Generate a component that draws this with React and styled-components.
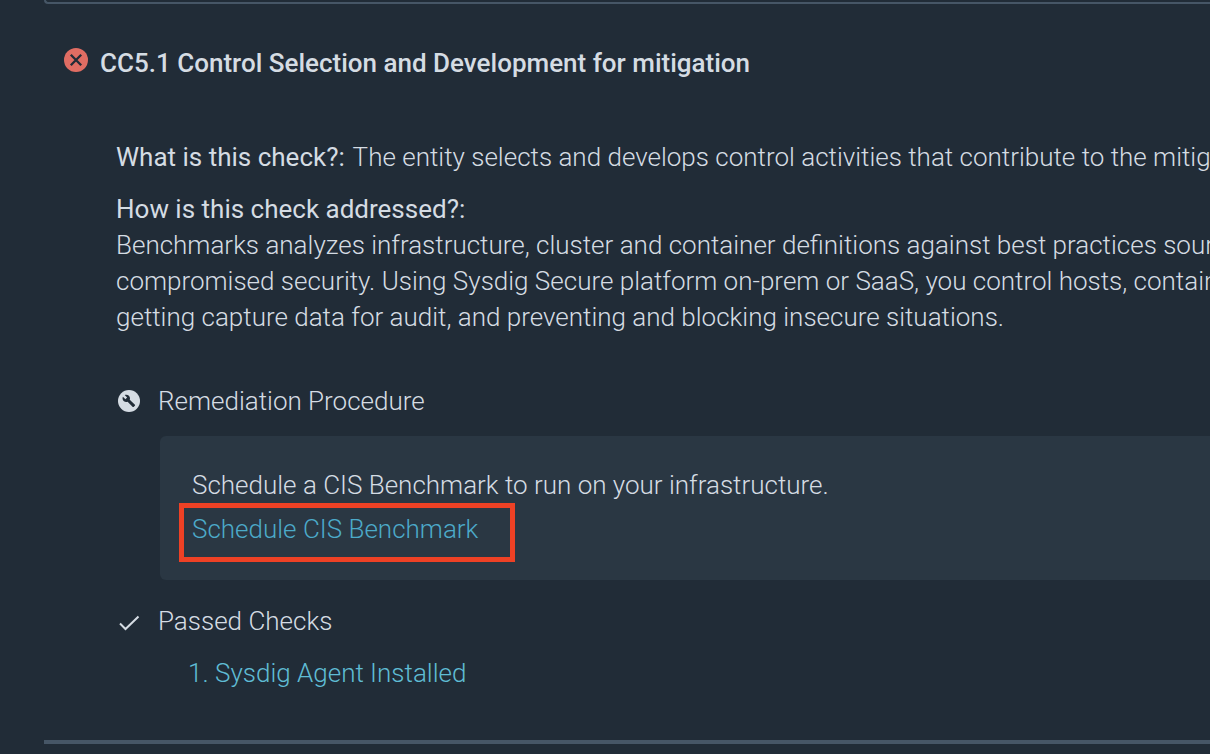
import React from "react";
import styled, { createGlobalStyle } from "styled-components";

const Global = createGlobalStyle`
  *, *::before, *::after { box-sizing: border-box; }
  body {
    margin: 0;
    background: #212c37;
    color: #d5dce3;
    font-family: Roboto, "Liberation Sans", sans-serif;
    font-size: 26px;
    font-weight: 300;
    line-height: 36px;
    overflow-x: hidden;
  }
  h2, h3, p, ol { margin: 0; padding: 0; font-size: inherit; }
`;

const Page = styled.main`
  padding-left: 44px;
  overflow: hidden;
`;

const PreviousPanel = styled.div`
  height: 4px;
  border: 2px solid #465666;
  border-width: 0 0 2px 2px;
  border-bottom-left-radius: 6px;
`;

const Control = styled.section`
  padding: 41px 0 49px 20px;
  border-bottom: 4px solid #465666;
`;

const ControlHeader = styled.header`
  display: flex;
  align-items: flex-start;
  gap: 12px;
  svg { flex: none; margin-top: 3px; }
`;

const ControlTitle = styled.h2`
  font-weight: 500;
`;

const Details = styled.div`
  padding: 58px 0 0 52px;
`;

const Paragraph = styled.p`
  white-space: nowrap;
  margin-bottom: ${(p) => p.$gap || 0}px;
`;

const Label = styled.strong`
  margin-right: 2px;
  font-weight: 400;
`;

const SectionTitle = styled.h3`
  display: flex;
  align-items: center;
  gap: 18px;
  font-weight: 300;
  svg { flex: none; }
`;

const Remediation = styled.div`
  margin: 17px 0 23px 44px;
  padding: 31px 32px 18px 19px;
  background: #2a3743;
  border-radius: 6px 0 0 6px;
`;

const RemediationText = styled.p`
  padding-left: 13px;
`;

const Highlight = styled.div`
  width: fit-content;
  padding: 3px 32px 10px 8px;
  border: 5px solid #ee4125;
`;

const Link = styled.a`
  color: #4caac9;
  text-decoration: none;
`;

const CheckList = styled.ol`
  margin: 16px 0 0 72px;
  color: #5fbcd4;
  list-style-position: inside;
  a { color: inherit; }
`;

const ErrorIcon = () => (
  <svg width="24" height="24" viewBox="0 0 24 24" aria-hidden="true">
    <circle cx="12" cy="12" r="12" fill="#e06d63" />
    <path d="M6.8 6.8l10.4 10.4M17.2 6.8L6.8 17.2" stroke="#212c37" strokeWidth="2.3" />
  </svg>
);

const WrenchIcon = () => (
  <svg width="24" height="24" viewBox="0 0 24 24" aria-hidden="true">
    <circle cx="13" cy="12" r="11" fill="#d5dce3" />
    <path
      transform="translate(6 5) scale(.57)"
      fill="#212c37"
      d="M22.7 19l-9.1-9.1c.9-2.3.4-5-1.5-6.9-2-2-5-2.4-7.4-1.3L9 6 6 9 1.6 4.7C.4 7.1.9 10.1 2.9 12.1c1.9 1.9 4.6 2.4 6.9 1.5l9.1 9.1c.4.4 1 .4 1.4 0l2.3-2.3c.5-.4.5-1.1.1-1.4z"
    />
  </svg>
);

const CheckIcon = () => (
  <svg width="24" height="24" viewBox="0 0 24 24" fill="none" aria-hidden="true">
    <path d="M4 14.5l5.5 5.5L22.5 7.5" stroke="#d5dce3" strokeWidth="2" />
  </svg>
);

export default function App() {
  return (
    <>
      <Global />
      <Page>
        <PreviousPanel />
        <Control>
          <ControlHeader>
            <ErrorIcon />
            <ControlTitle>CC5.1 Control Selection and Development for mitigation</ControlTitle>
          </ControlHeader>
          <Details>
            <Paragraph $gap={16}>
              <Label>What is this check?:</Label> The entity selects and develops control activities that contribute to the mitigation of risks
            </Paragraph>
            <Paragraph $gap={48}>
              <Label>How is this check addressed?:</Label>
              <br />
              Benchmarks analyzes infrastructure, cluster and container definitions against best practices sourced
              <br />
              compromised security. Using Sysdig Secure platform on-prem or SaaS, you control hosts, containers
              <br />
              getting capture data for audit, and preventing and blocking insecure situations.
            </Paragraph>
            <SectionTitle><WrenchIcon />Remediation Procedure</SectionTitle>
            <Remediation>
              <RemediationText>Schedule a CIS Benchmark to run on your infrastructure.</RemediationText>
              <Highlight><Link href="#schedule">Schedule CIS Benchmark</Link></Highlight>
            </Remediation>
            <SectionTitle><CheckIcon />Passed Checks</SectionTitle>
            <CheckList>
              <li><Link href="#agent">Sysdig Agent Installed</Link></li>
            </CheckList>
          </Details>
        </Control>
      </Page>
    </>
  );
}
